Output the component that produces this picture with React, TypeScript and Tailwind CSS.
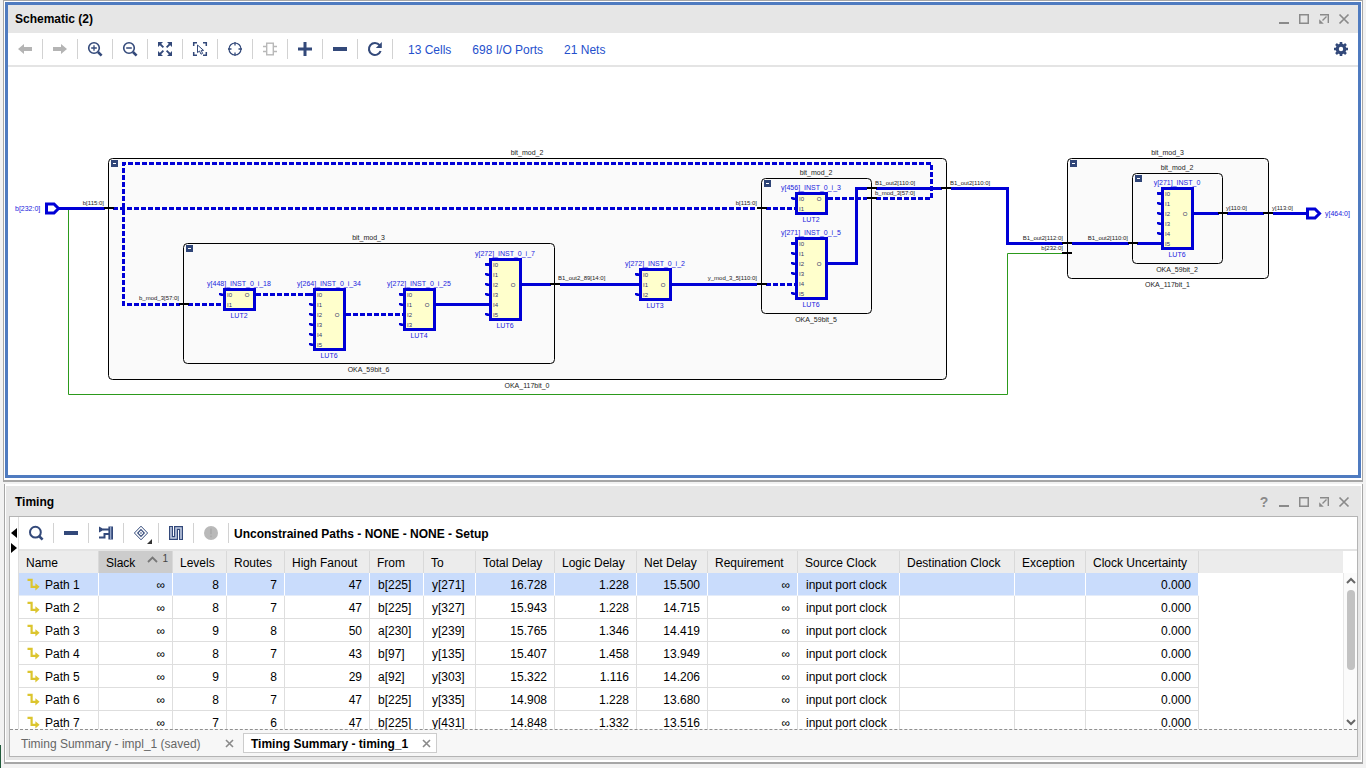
import type { ReactNode } from "react";

const NAVY = "#33497a";
const WIRE = "#0000d6";

/* ---------- toolbar icons ---------- */

function Icon({ children, size = 16 }: { children: ReactNode; size?: number }) {
  return (
    <svg width={size} height={size} viewBox="0 0 16 16" fill="none" aria-hidden="true">
      {children}
    </svg>
  );
}

const icons = {
  back: (
    <Icon>
      <path d="M1 8 7 3V6H15V10H7V13Z" fill="#b4b4b4" />
    </Icon>
  ),
  forward: (
    <Icon>
      <path d="M15 8 9 3V6H1V10H9V13Z" fill="#b4b4b4" />
    </Icon>
  ),
  zoomIn: (
    <Icon>
      <circle cx="7" cy="7" r="5.3" stroke={NAVY} strokeWidth="1.6" />
      <path d="M4.2 7H9.8M7 4.2V9.8" stroke={NAVY} strokeWidth="1.3" />
      <path d="M11 11 14.6 14.6" stroke={NAVY} strokeWidth="2.6" />
    </Icon>
  ),
  zoomOut: (
    <Icon>
      <circle cx="7" cy="7" r="5.3" stroke={NAVY} strokeWidth="1.6" />
      <path d="M4.2 7H9.8" stroke={NAVY} strokeWidth="1.5" />
      <path d="M11 11 14.6 14.6" stroke={NAVY} strokeWidth="2.6" />
    </Icon>
  ),
  fit: (
    <Icon>
      <path d="M1 1H6L1 6ZM15 1V6L10 1ZM1 15V10L6 15ZM15 15H10L15 10Z" fill={NAVY} />
      <path d="M2 2 6.4 6.4M14 2 9.6 6.4M2 14 6.4 9.6M14 14 9.6 9.6" stroke={NAVY} strokeWidth="1.8" />
    </Icon>
  ),
  select: (
    <Icon>
      <path d="M1.7 5V1.7H5M11 1.7H14.3V5M14.3 11V14.3H11M5 14.3H1.7V11" stroke={NAVY} strokeWidth="1.5" />
      <path d="M5.5 4V11.6L7.5 10 9 13.2 10.6 12.4 9.2 9.4H11.6Z" stroke={NAVY} strokeWidth="1" />
    </Icon>
  ),
  target: (
    <Icon>
      <circle cx="8" cy="8" r="6" stroke={NAVY} strokeWidth="1.2" />
      <path d="M8 1V4.5M8 11.5V15M1 8H4.5M11.5 8H15" stroke={NAVY} strokeWidth="1.3" />
    </Icon>
  ),
  cell: (
    <Icon>
      <rect x="4.7" y="2.2" width="6.6" height="11.6" stroke="#b8b8b8" strokeWidth="1.4" />
      <path d="M1 5.5H4.7M1 10.5H4.7M11.3 5.5H15M11.3 10.5H15" stroke="#b8b8b8" strokeWidth="1.4" />
    </Icon>
  ),
  plus: (
    <Icon>
      <path d="M1 8H15M8 1V15" stroke={NAVY} strokeWidth="3" />
    </Icon>
  ),
  minus: (
    <Icon>
      <path d="M1 8H15" stroke={NAVY} strokeWidth="4" />
    </Icon>
  ),
  refresh: (
    <Icon>
      <path d="M12.6 4.2A6 6 0 1 0 13.6 10" stroke={NAVY} strokeWidth="2.1" />
      <path d="M14.8 1V7H8.8Z" fill={NAVY} />
    </Icon>
  ),
  search: (
    <Icon>
      <circle cx="7.4" cy="7.2" r="5.4" stroke={NAVY} strokeWidth="2" />
      <path d="M11 11 14.6 14.6" stroke={NAVY} strokeWidth="2.6" />
    </Icon>
  ),
  expand: (
    <Icon>
      <path d="M1 1.5 6.5 4.5 1 7.5Z" fill={NAVY} />
      <path d="M5 4.5H11M1 12.5H6.5V9H11" stroke={NAVY} strokeWidth="2" />
      <path d="M10.4 1.5H15V14.5H10.4Z" fill={NAVY} />
      <path d="M12.7 1.5V14.5" stroke="#9fb0d0" strokeWidth="1.2" />
    </Icon>
  ),
  marker: (
    <Icon>
      <path d="M8 1.2 14.6 8 8 14.8 1.4 8Z" stroke={NAVY} strokeWidth="1" />
      <path d="M8 4.6 11.3 8 8 11.4 4.7 8Z" stroke={NAVY} strokeWidth="1.1" />
      <circle cx="8" cy="8" r="0.8" fill={NAVY} />
    </Icon>
  ),
  wave: (
    <Icon>
      <path d="M3 1V13H8V3H13V15" stroke={NAVY} strokeWidth="4" />
      <path d="M3 2V13H8V3H13V14" stroke="#c3cee3" strokeWidth="1.6" />
    </Icon>
  ),
  stop: (
    <Icon>
      <circle cx="8" cy="8" r="7" fill="#b9b9b9" />
      <path d="M8 3.6V9.2M8 10.6V12.2" stroke="#aaaaaa" strokeWidth="1.6" />
    </Icon>
  ),
  gear: (
    <Icon>
      <circle cx="8" cy="8" r="3.8" stroke={NAVY} strokeWidth="3.2" />
      <path
        d="M8 1V3.4M8 12.6V15M1 8H3.4M12.6 8H15M3 3 4.7 4.7M11.3 11.3 13 13M3 13 4.7 11.3M11.3 4.7 13 3"
        stroke={NAVY}
        strokeWidth="2.6"
      />
    </Icon>
  ),
};

function ToolButton({ label, icon, disabled, menu }: { label: string; icon: ReactNode; disabled?: boolean; menu?: boolean }) {
  return (
    <button
      type="button"
      aria-label={label}
      title={label}
      disabled={disabled}
      className="relative flex h-5 w-[35px] shrink-0 items-center justify-center border-r border-[#d2d2d2]"
    >
      {icon}
      {menu && (
        <svg width="5" height="5" viewBox="0 0 5 5" className="absolute right-1.5 -bottom-px" aria-hidden="true">
          <path d="M5 0V5H0Z" fill="#333" />
        </svg>
      )}
    </button>
  );
}

function WindowButtons({ help }: { help?: boolean }) {
  const style = "flex h-5 w-5 items-center justify-center";
  return (
    <div className="flex items-center pr-1">
      {help && (
        <button type="button" aria-label="Help" className={style}>
          <span className="text-[14px] leading-5 font-bold text-[#8a8a8a]">?</span>
        </button>
      )}
      <button type="button" aria-label="Minimize" className={style}>
        <svg width="12" height="12" viewBox="0 0 12 12" fill="none" stroke="#8a8a8a">
          <path d="M1 10H11" strokeWidth="2" />
        </svg>
      </button>
      <button type="button" aria-label="Maximize" className={style}>
        <svg width="12" height="12" viewBox="0 0 12 12" fill="none" stroke="#8a8a8a">
          <rect x="1.75" y="1.75" width="8.5" height="8.5" strokeWidth="1.5" />
        </svg>
      </button>
      <button type="button" aria-label="Float" className={style}>
        <svg width="12" height="12" viewBox="0 0 12 12" fill="none" stroke="#8a8a8a">
          <path d="M2 1.7H10.3V10M8.5 3.5 4.5 7.5" strokeWidth="1.4" />
          <path d="M1.2 6.2V10.8H5.8Z" fill="#8a8a8a" stroke="none" />
        </svg>
      </button>
      <button type="button" aria-label="Close" className={style}>
        <svg width="12" height="12" viewBox="0 0 12 12" fill="none" stroke="#8a8a8a">
          <path d="M1.5 1.5 10.5 10.5M10.5 1.5 1.5 10.5" strokeWidth="1.7" />
        </svg>
      </button>
    </div>
  );
}

/* ---------- schematic drawing ---------- */

interface Block { x: number; y: number; w: number; h: number; top: string; bottom: string; fill: string }
interface Lut { x: number; y: number; pins: number; out: number; wired: number[]; name: string; type: string }

const blocks: Block[] = [
  { x: 108, y: 158, w: 838, h: 221, top: "bit_mod_2", bottom: "OKA_117bit_0", fill: "#fafafa" },
  { x: 183, y: 243, w: 371, h: 120, top: "bit_mod_3", bottom: "OKA_59bit_6", fill: "#fafafa" },
  { x: 761, y: 178, w: 110, h: 135, top: "bit_mod_2", bottom: "OKA_59bit_5", fill: "#fafafa" },
  { x: 1067, y: 158, w: 201, h: 120, top: "bit_mod_3", bottom: "OKA_117bit_1", fill: "#fafafa" },
  { x: 1132, y: 173, w: 90, h: 90, top: "bit_mod_2", bottom: "OKA_59bit_2", fill: "#fafafa" },
];

const luts: Lut[] = [
  { x: 223, y: 288, pins: 2, out: 0, wired: [1], name: "y[448]_INST_0_i_18", type: "LUT2" },
  { x: 313, y: 288, pins: 6, out: 2, wired: [0], name: "y[264]_INST_0_i_34", type: "LUT6" },
  { x: 403, y: 288, pins: 4, out: 1, wired: [2], name: "y[272]_INST_0_i_25", type: "LUT4" },
  { x: 489, y: 258, pins: 6, out: 2, wired: [4], name: "y[272]_INST_0_i_7", type: "LUT6" },
  { x: 639, y: 268, pins: 3, out: 1, wired: [1], name: "y[272]_INST_0_i_2", type: "LUT3" },
  { x: 795, y: 192, pins: 2, out: 0, wired: [1], name: "y[456]_INST_0_i_3", type: "LUT2" },
  { x: 795, y: 237, pins: 6, out: 2, wired: [4], name: "y[271]_INST_0_i_5", type: "LUT6" },
  { x: 1161, y: 187, pins: 6, out: 2, wired: [5], name: "y[271]_INST_0", type: "LUT6" },
];

const solidNets = [
  "M58 208.5H105",
  "M436 304.5H490",
  "M522 284.5H551M560 284.5H640",
  "M672 284.5H757",
  "M828 263.5H856.5V188.5H867M876 188.5H942M951 188.5H1007.5V243.5H1063M1072 243.5H1129M1137 243.5H1162",
  "M1194 213.5H1219M1227 213.5H1264M1273 213.5H1307",
];

const dashedNets = [
  "M113 208.5H757",
  "M766 208.5H796",
  "M828 198.5H867",
  "M876 198.5H931.5V163.5H123.5V304.5H180",
  "M188 304.5H224",
  "M256 294.5H314",
  "M346 314.5H404",
  "M766 284.5H796",
];

const crossings: [number, number][] = [
  [104, 208], [179, 304], [550, 284], [757, 208], [757, 284], [867, 188], [867, 198],
  [941, 188], [1062, 243], [1062, 253], [1128, 243], [1218, 213], [1263, 213],
];

const netLabels: [number, number, string, "start" | "end"][] = [
  [104, 205, "b[115:0]", "end"],
  [179, 300, "b_mod_3[57:0]", "end"],
  [558, 280, "B1_out2_89[14:0]", "start"],
  [757, 280, "y_mod_3_5[110:0]", "end"],
  [757, 205, "b[115:0]", "end"],
  [875, 185, "B1_out2[110:0]", "start"],
  [875, 195, "b_mod_3[57:0]", "start"],
  [950, 185, "B1_out2[110:0]", "start"],
  [1063, 240, "B1_out2[112:0]", "end"],
  [1063, 250, "b[232:0]", "end"],
  [1128, 240, "B1_out2[110:0]", "end"],
  [1226, 210, "y[110:0]", "start"],
  [1272, 210, "y[113:0]", "start"],
];

function Schematic() {
  return (
    <svg
      width="1350"
      height="408"
      viewBox="8 67 1350 408"
      className="block shrink-0 font-['Liberation_Sans',Arial,sans-serif]"
      role="img"
      aria-label="Schematic"
    >
      {blocks.map((b) => (
        <g key={b.bottom}>
          <rect x={b.x + 0.5} y={b.y + 0.5} width={b.w} height={b.h} rx="4" fill={b.fill} stroke="#000" />
          <rect x={b.x + 3} y={b.y + 2} width="7" height="7" fill="#2f4577" />
          <path d={`M${b.x + 5} ${b.y + 5.5}h3`} stroke="#fff" />
          <text x={b.x + b.w / 2} y={b.y - 3} fontSize="7" textAnchor="middle" fill="#222">{b.top}</text>
          <text x={b.x + b.w / 2} y={b.y + b.h + 9} fontSize="7" textAnchor="middle" fill="#222">{b.bottom}</text>
        </g>
      ))}

      <path d="M68.5 210V394.5H1007.5V253.5H1063" fill="none" stroke="#2c9a1c" />
      {solidNets.map((d) => (
        <path key={d} d={d} fill="none" stroke={WIRE} strokeWidth="3" />
      ))}
      {dashedNets.map((d) => (
        <path key={d} d={d} fill="none" stroke={WIRE} strokeWidth="3" strokeDasharray="5 2" />
      ))}
      {crossings.map(([x, y]) => (
        <rect key={`${x}-${y}`} x={x} y={y - 1} width="10" height="2" fill="#000" />
      ))}
      {netLabels.map(([x, y, label, anchor]) => (
        <text key={`${x}-${y}`} x={x} y={y} fontSize="6" textAnchor={anchor} fill="#222">{label}</text>
      ))}

      {luts.map((l) => {
        const h = l.pins * 10 + 3;
        const pinRows = Array.from({ length: l.pins }, (_, i) => i);
        return (
          <g key={l.name}>
            {pinRows.filter((i) => !l.wired.includes(i)).map((i) => (
              <path key={i} d={`M${l.x - 4} ${l.y + 5}h2l3 1v2h-3l-2 -1z`} fill={WIRE} />
            ))}
            <rect x={l.x + 1.5} y={l.y + 1.5} width="30" height={h - 3} fill="#ffffcc" stroke={WIRE} strokeWidth="3" />
            {pinRows.filter((i) => i > 0 && !l.wired.includes(i)).map((i) => (
              <path key={i} d={`M${l.x - 4} ${l.y + 5 + i * 10}h2l3 1v2h-3l-2 -1z`} fill={WIRE} />
            ))}
            {pinRows.map((i) => (
              <text key={i} x={l.x + 4} y={l.y + 9 + i * 10} fontSize="6" fill="#33336b">{`I${i}`}</text>
            ))}
            <text x={l.x + 24} y={l.y + 9 + l.out * 10} fontSize="6" textAnchor="middle" fill="#33336b">O</text>
            <text x={l.x + 16} y={l.y - 2} fontSize="7" textAnchor="middle" fill="#2222dd">{l.name}</text>
            <text x={l.x + 16} y={l.y + h + 7} fontSize="7" textAnchor="middle" fill="#2222dd">{l.type}</text>
          </g>
        );
      })}

      <path d="M46.5 204H54L58.5 208.5 54 213H46.5Z" fill="#fff" stroke={WIRE} strokeWidth="3" />
      <text x="15" y="211" fontSize="7" fill="#2222dd">b[232:0]</text>
      <path d="M1307.5 209H1315L1319.5 213.5 1315 218H1307.5Z" fill="#fff" stroke={WIRE} strokeWidth="3" />
      <text x="1325" y="216" fontSize="7" fill="#2222dd">y[464:0]</text>
    </svg>
  );
}

/* ---------- timing table ---------- */

const columns: { label: string; width: string; align: "left" | "right" }[] = [
  { label: "Name", width: "w-[80px]", align: "left" },
  { label: "Slack", width: "w-[74px]", align: "right" },
  { label: "Levels", width: "w-[54px]", align: "right" },
  { label: "Routes", width: "w-[58px]", align: "right" },
  { label: "High Fanout", width: "w-[85px]", align: "right" },
  { label: "From", width: "w-[54px]", align: "left" },
  { label: "To", width: "w-[52px]", align: "left" },
  { label: "Total Delay", width: "w-[79px]", align: "right" },
  { label: "Logic Delay", width: "w-[82px]", align: "right" },
  { label: "Net Delay", width: "w-[71px]", align: "right" },
  { label: "Requirement", width: "w-[90px]", align: "right" },
  { label: "Source Clock", width: "w-[102px]", align: "left" },
  { label: "Destination Clock", width: "w-[115px]", align: "left" },
  { label: "Exception", width: "w-[71px]", align: "left" },
  { label: "Clock Uncertainty", width: "w-[113px]", align: "right" },
];

const clock = "input port clock";
const rows: string[][] = [
  ["Path 1", "∞", "8", "7", "47", "b[225]", "y[271]", "16.728", "1.228", "15.500", "∞", clock, "", "", "0.000"],
  ["Path 2", "∞", "8", "7", "47", "b[225]", "y[327]", "15.943", "1.228", "14.715", "∞", clock, "", "", "0.000"],
  ["Path 3", "∞", "9", "8", "50", "a[230]", "y[239]", "15.765", "1.346", "14.419", "∞", clock, "", "", "0.000"],
  ["Path 4", "∞", "8", "7", "43", "b[97]", "y[135]", "15.407", "1.458", "13.949", "∞", clock, "", "", "0.000"],
  ["Path 5", "∞", "9", "8", "29", "a[92]", "y[303]", "15.322", "1.116", "14.206", "∞", clock, "", "", "0.000"],
  ["Path 6", "∞", "8", "7", "47", "b[225]", "y[335]", "14.908", "1.228", "13.680", "∞", clock, "", "", "0.000"],
  ["Path 7", "∞", "7", "6", "47", "b[225]", "y[431]", "14.848", "1.332", "13.516", "∞", clock, "", "", "0.000"],
];

function PathIcon() {
  return (
    <svg width="13" height="14" viewBox="0 0 13 14" fill="none" aria-hidden="true" className="shrink-0">
      <path d="M0.5 1.8H4.6V8.8H9" stroke="#dcc52e" strokeWidth="2.2" />
      <path d="M8.4 5.2 12.6 8.8 8.4 12.4Z" fill="#dcc52e" />
    </svg>
  );
}

function TimingTable() {
  return (
    <table className="w-full table-fixed border-separate border-spacing-0 text-[12px] leading-5 text-black">
      <colgroup>
        {columns.map((c) => (
          <col key={c.label} className={c.width} />
        ))}
        <col />
      </colgroup>
      <thead>
        <tr className="h-[22px]">
          {columns.map((c, i) => (
            <th
              key={c.label}
              scope="col"
              className={`border-r border-[#d9d9d9] p-0 pt-[2px] pl-[7px] text-left font-normal whitespace-nowrap ${i === 1 ? "bg-[#cccccc]" : "bg-[#ececec]"}`}
            >
              {i === 1 ? (
                <span className="flex items-center justify-between pr-1">
                  {c.label}
                  <span className="flex h-5 items-start gap-1 text-[10px] leading-3 text-[#444]">
                    <svg width="11" height="12" viewBox="0 0 11 12" fill="none" aria-hidden="true">
                      <path d="M1 9 5.5 4.5 10 9" stroke="#777" strokeWidth="1.8" />
                    </svg>
                    1
                  </span>
                </span>
              ) : (
                c.label
              )}
            </th>
          ))}
          <th className="bg-[#ececec] p-0" aria-hidden="true" />
        </tr>
      </thead>
      <tbody>
        {rows.map((row, r) => (
          <tr key={row[0]} className="h-[23px]">
            {row.map((value, c) => (
              <td
                key={columns[c].label}
                className={`border-r border-b p-0 pt-[2px] whitespace-nowrap ${r === 0 ? "border-r-white border-b-[#e4ecf9] bg-[#c9dcfc]" : "border-[#dedede] bg-white"} ${columns[c].align === "right" ? "pr-[7px] text-right" : "pl-2 text-left"}`}
              >
                {c === 0 ? (
                  <span className="flex items-center gap-[5px]">
                    <PathIcon />
                    {value}
                  </span>
                ) : (
                  value
                )}
              </td>
            ))}
            <td className="p-0" />
          </tr>
        ))}
      </tbody>
    </table>
  );
}

function CloseGlyph() {
  return (
    <svg width="9" height="9" viewBox="0 0 9 9" fill="none" aria-hidden="true">
      <path d="M1 1 8 8M8 1 1 8" stroke="#8a8a8a" strokeWidth="1.6" />
    </svg>
  );
}

/* ---------- page ---------- */

export default function App() {
  return (
    <div className="relative flex min-h-screen flex-col overflow-hidden bg-[#f2f2f2] font-['Liberation_Sans',Arial,sans-serif] text-[12px] text-black">
      <div className="absolute bottom-0 left-0 h-[23px] w-px bg-[#1f5a3a]" />

      <section className="mx-[3px] flex flex-1 flex-col border border-b-2 border-[#a6a6a6] bg-white p-px pb-[2px]">
        <div className="flex flex-1 flex-col border-[3px] border-[#4f7bc0]">
          <header className="flex h-7 items-center justify-between bg-[#e6e6e6] pl-[7px]">
            <h2 className="text-[12px] font-bold">Schematic (2)</h2>
            <WindowButtons />
          </header>
          <div className="flex h-[34px] items-center border-b-2 border-[#e4e4e4]">
            <ToolButton label="Previous" icon={icons.back} disabled />
            <ToolButton label="Next" icon={icons.forward} disabled />
            <ToolButton label="Zoom In" icon={icons.zoomIn} />
            <ToolButton label="Zoom Out" icon={icons.zoomOut} />
            <ToolButton label="Zoom Fit" icon={icons.fit} />
            <ToolButton label="Select Area" icon={icons.select} />
            <ToolButton label="Auto-fit Selection" icon={icons.target} />
            <ToolButton label="Expand Cell" icon={icons.cell} disabled />
            <ToolButton label="Add" icon={icons.plus} />
            <ToolButton label="Remove" icon={icons.minus} />
            <ToolButton label="Regenerate" icon={icons.refresh} />
            <nav className="flex gap-[21px] pt-px pl-[15px] text-[#2450cc]">
              <a href="#cells">13 Cells</a>
              <a href="#ports">698 I/O Ports</a>
              <a href="#nets">21 Nets</a>
            </nav>
            <button type="button" aria-label="Settings" className="mr-[9px] ml-auto">
              {icons.gear}
            </button>
          </div>
          <div className="flex-1 overflow-hidden bg-white">
            <Schematic />
          </div>
        </div>
      </section>

      <section className="mt-[2px] mr-[3px] mb-1 ml-1 border border-t-0 border-b-2 border-[#a6a6a6] bg-white px-px py-[2px]">
        <div className="bg-[#e6e6e6] px-[3px] pb-[3px]">
          <header className="flex h-[30px] items-center justify-between pt-[2px] pl-[6px]">
            <h2 className="text-[12px] font-bold">Timing</h2>
            <WindowButtons help />
          </header>
          <div className="border border-[#b4b4b4] bg-white">
            <div className="flex">
              <div className="flex w-2 flex-col items-center gap-[5px] pt-[11px]">
                <button type="button" aria-label="Collapse left">
                  <svg width="6" height="10" viewBox="0 0 6 10" className="block" aria-hidden="true">
                    <path d="M6 0V10L0 5Z" fill="#000" />
                  </svg>
                </button>
                <button type="button" aria-label="Expand right">
                  <svg width="6" height="10" viewBox="0 0 6 10" className="block" aria-hidden="true">
                    <path d="M0 0V10L6 5Z" fill="#000" />
                  </svg>
                </button>
              </div>
              <div className="min-w-0 flex-1 border-l border-[#dedede]">
                <div className="flex h-[34px] items-center border-b-2 border-[#e4e4e4]">
                  <ToolButton label="Search" icon={icons.search} />
                  <ToolButton label="Collapse All" icon={icons.minus} />
                  <ToolButton label="Show Hierarchy" icon={icons.expand} />
                  <ToolButton label="Mark" icon={icons.marker} menu />
                  <ToolButton label="Waveform" icon={icons.wave} />
                  <ToolButton label="Stop" icon={icons.stop} disabled />
                  <span className="pt-px pl-[5px] font-bold">Unconstrained Paths - NONE - NONE - Setup</span>
                </div>
                <div className="flex h-[178px]">
                  <div className="min-w-0 flex-1 overflow-hidden">
                    <TimingTable />
                  </div>
                  <div className="mt-[22px] flex w-[14px] flex-col items-center border-l border-[#e8e8e8] bg-[#fbfbfb] pt-1">
                    <button type="button" aria-label="Scroll up">
                      <svg width="10" height="7" viewBox="0 0 10 7" fill="none" className="block" aria-hidden="true">
                        <path d="M1 6 5 2 9 6" stroke="#666" strokeWidth="2" />
                      </svg>
                    </button>
                    <div className="mt-[6px] h-20 w-2 rounded-full bg-[#c2c2c2]" />
                    <button type="button" aria-label="Scroll down" className="mt-auto mb-[3px]">
                      <svg width="10" height="7" viewBox="0 0 10 7" fill="none" className="block" aria-hidden="true">
                        <path d="M1 1 5 5 9 1" stroke="#666" strokeWidth="2" />
                      </svg>
                    </button>
                  </div>
                </div>
              </div>
            </div>
            <div className="flex h-[27px] items-center border-t border-dashed border-[#8f8f8f] bg-[#f7f7f7]">
              <div className="flex h-5 w-[233px] items-center justify-between pt-px pr-[9px] pl-[11px] text-[#666]">
                <button type="button">Timing Summary - impl_1 (saved)</button>
                <button type="button" aria-label="Close Timing Summary - impl_1">
                  <CloseGlyph />
                </button>
              </div>
              <div className="flex h-5 w-[194px] items-center justify-between border border-[#cccccc] bg-white pt-px pr-[5px] pl-[7px] font-bold">
                <button type="button">Timing Summary - timing_1</button>
                <button type="button" aria-label="Close Timing Summary - timing_1">
                  <CloseGlyph />
                </button>
              </div>
            </div>
          </div>
        </div>
      </section>
    </div>
  );
}
